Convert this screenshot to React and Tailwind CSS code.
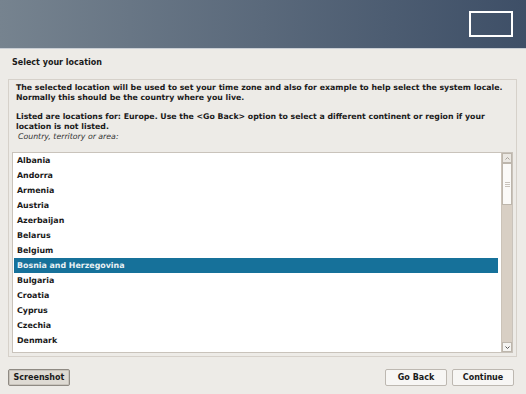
import React from "react";

const countries = [
  "Albania",
  "Andorra",
  "Armenia",
  "Austria",
  "Azerbaijan",
  "Belarus",
  "Belgium",
  "Bosnia and Herzegovina",
  "Bulgaria",
  "Croatia",
  "Cyprus",
  "Czechia",
  "Denmark",
];

const Button = ({ children, pressed }) => (
  <div
    className={
      pressed
        ? "h-[17px] flex items-center justify-center border border-[#8f8a83] bg-[#dedad3] rounded-[2px] shadow-[inset_0_0_0_1px_#c9c4bc]"
        : "h-[17px] flex items-center justify-center border border-[#bdb8b1] bg-[#f7f6f4] rounded-[2px]"
    }
  >
    {children}
  </div>
);

export default function App() {
  return (
    <div
      className="w-[526px] h-[394px] flex flex-col bg-[#edebe7] text-[#1a1a1a] overflow-hidden"
      style={{ fontFamily: '"DejaVu Sans", sans-serif' }}
    >
      {/* banner */}
      <div className="h-[49px] shrink-0 flex items-start justify-end pr-[13px] pt-[11px] bg-gradient-to-r from-[#76838f] via-[#5a697b] to-[#3e4f67] border-b border-[#c9ced4]">
        <div className="w-[44px] h-[26px] border-2 border-white" />
      </div>

      <div className="px-[12px] pt-[9px] pb-[11px] text-[8px] leading-[10px] font-bold">Select your location</div>

      {/* main panel */}
      <div className="ml-[8px] mr-[9px] h-[278px] border border-[#d6d1ca] flex flex-col pl-[3px] pr-[3px] pt-[3px]">
        <div className="pl-[4px] text-[7.8px] font-bold leading-[10px]">
          <p>
            The selected location will be used to set your time zone and also for example to help select the system locale.
            Normally this should be the country where you live.
          </p>
          <p className="mt-[9px]">
            Listed are locations for: Europe. Use the &lt;Go Back&gt; option to select a different continent or region if your
            location is not listed.
          </p>
        </div>
        <div className="pl-[6px] pb-[10px] text-[7.8px] italic text-[#333] leading-[10px]">Country, territory or area:</div>

        <div className="h-[201px] flex border border-[#c9c3bb] bg-white">
          <div className="flex-1 pl-[1px] pr-[3px] flex flex-col">
            {countries.map((c) => (
              <div
                key={c}
                className={
                  c === "Bosnia and Herzegovina"
                    ? "h-[15px] pl-[3px] flex items-center text-[7.9px] font-bold bg-[#16719a] text-[#e9f0f4]"
                    : "h-[15px] pl-[3px] flex items-center text-[7.9px] font-bold"
                }
              >
                {c}
              </div>
            ))}
          </div>
          {/* scrollbar */}
          <div className="w-[11px] flex flex-col bg-[#d8cfc4] border-l border-[#cbc3b8]">
            <div className="h-[10px] flex items-center justify-center bg-[#ebe8e3] border border-[#bdb6ac]">
              <svg width="5" height="3" viewBox="0 0 5 3">
                <path d="M0.5 2.5 L2.5 0.5 L4.5 2.5" stroke="#a9a39b" fill="none" strokeWidth="1" />
              </svg>
            </div>
            <div className="h-[42px] bg-[#fbfaf8] border border-[#bdb6ac] flex flex-col items-center justify-center gap-[1px]">
              <div className="w-[5px] h-px bg-[#c8c2ba]" />
              <div className="w-[5px] h-px bg-[#c8c2ba]" />
              <div className="w-[5px] h-px bg-[#c8c2ba]" />
            </div>
            <div className="flex-1" />
            <div className="h-[10px] flex items-center justify-center bg-[#f5f4f1] border border-[#bdb6ac]">
              <svg width="5" height="3" viewBox="0 0 5 3">
                <path d="M0.5 0.5 L2.5 2.5 L4.5 0.5" stroke="#555" fill="none" strokeWidth="1" />
              </svg>
            </div>
          </div>
        </div>
      </div>

      {/* buttons */}
      <div className="flex items-center pl-[8px] pr-[12px] pt-[12px] text-[8px] font-bold">
        <div className="w-[62px]">
          <Button pressed>Screenshot</Button>
        </div>
        <div className="flex-1" />
        <div className="w-[62px]">
          <Button>Go Back</Button>
        </div>
        <div className="w-[62px] ml-[5px]">
          <Button>Continue</Button>
        </div>
      </div>
    </div>
  );
}
